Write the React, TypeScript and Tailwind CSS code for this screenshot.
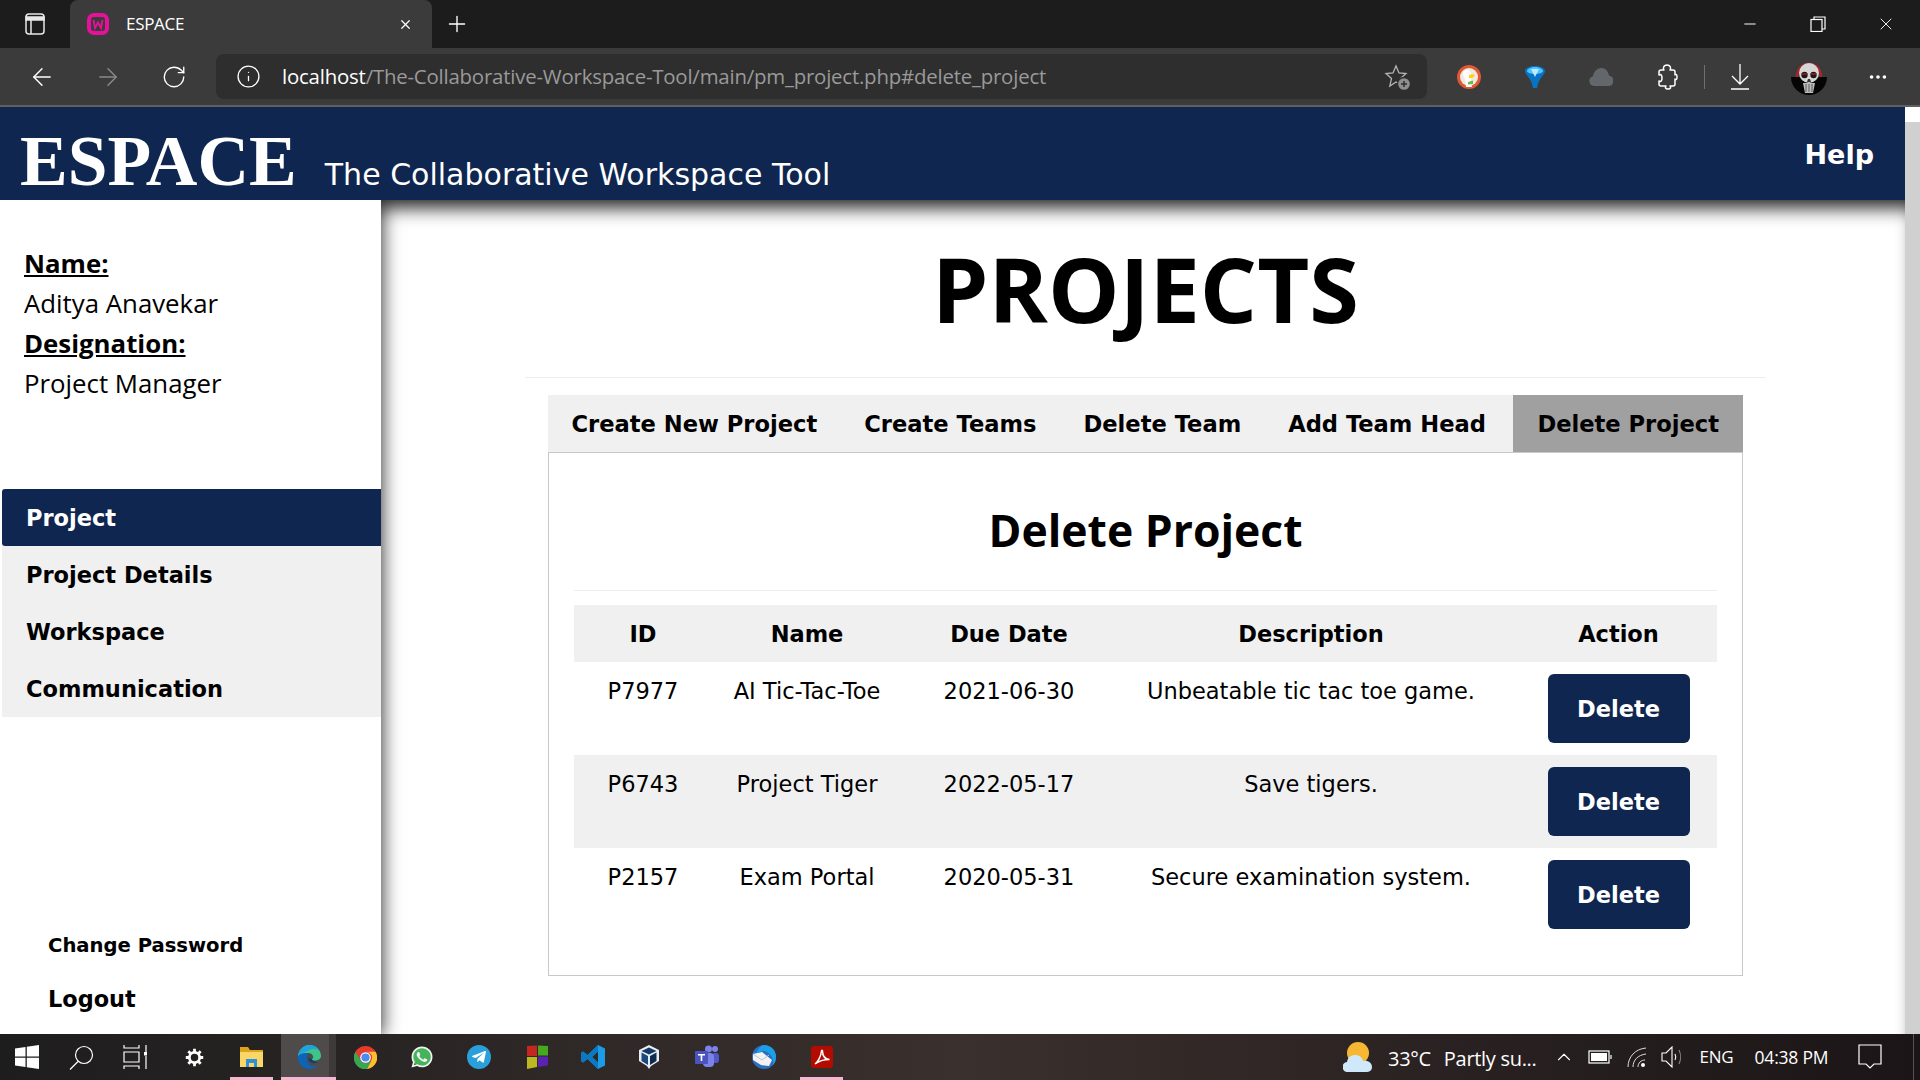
import { ArrowLeft, ArrowRight, RotateCw, Info, Plus, X, Minus, MoreHorizontal, ChevronUp } from "lucide-react";
import { FaTelegramPlane, FaWhatsapp } from "react-icons/fa";

const navItems = ["Project Details", "Workspace", "Communication"];
const tabs = ["Create New Project", "Create Teams", "Delete Team", "Add Team Head"];
const rows = [
  ["P7977", "AI Tic-Tac-Toe", "2021-06-30", "Unbeatable tic tac toe game."],
  ["P6743", "Project Tiger", "2022-05-17", "Save tigers."],
  ["P2157", "Exam Portal", "2020-05-31", "Secure examination system."],
];

function BrowserChrome() {
  return (
    <div className="h-[107px] shrink-0 border-b-2 border-[#5f5f5f] bg-[#3b3b3b] font-['Open_Sans',sans-serif] text-white">
      <div className="flex h-12 items-center bg-[#1c1c1c]">
        <div className="flex w-[70px] justify-center">
          <svg width="24" height="24" viewBox="0 0 24 24" fill="none" stroke="#e8e8e8" strokeWidth="1.5">
            <rect x="3" y="2" width="18" height="20" rx="3" />
            <path d="M3 5h18v3H3z" fill="#e8e8e8" />
            <path d="M8 8v14" />
          </svg>
        </div>
        <div className="flex h-12 w-[362px] items-center rounded-t-lg bg-[#3b3b3b] pl-4 pr-[19px]">
          <svg width="24" height="24" viewBox="0 0 24 24" fill="none" stroke="#e6119b" strokeWidth="4">
            <rect x="3" y="3" width="18" height="18" rx="5" />
            <path d="M7.500 8l1.500 8 3-5.500 3 5.500 1.500-8" strokeWidth="1.800" />
          </svg>
          <span className="ml-4 text-[17px] tracking-[-0.3px]">ESPACE</span>
          <X size={15} className="ml-auto" />
        </div>
        <Plus size={26} strokeWidth={1.25} className="ml-[12px]" />
        <div className="ml-auto flex items-center">
          <div className="flex w-[68px] justify-center"><Minus size={18} strokeWidth={1.3} /></div>
          <div className="flex w-[68px] justify-center">
            <svg width="16" height="16" viewBox="0 0 16 16" fill="none" stroke="white" strokeWidth="1.200">
              <rect x="1" y="3.500" width="11" height="12" />
              <path d="M4 3V1h11v12h-3" />
            </svg>
          </div>
          <div className="flex w-[68px] justify-center"><X size={20} strokeWidth={1.100} /></div>
        </div>
      </div>
      <div className="flex h-[57px] items-center">
        <div className="flex w-[216px] items-center">
          <div className="flex w-[84px] justify-center"><ArrowLeft size={28} strokeWidth={1.25} /></div>
          <div className="flex w-[48px] justify-center"><ArrowRight size={28} strokeWidth={1.25} className="text-[#8a8a8a]" /></div>
          <div className="flex w-[84px] justify-center"><RotateCw size={26} strokeWidth={1.25} /></div>
        </div>
        <div className="flex h-[45px] w-[1211px] items-center rounded-lg bg-[#2e2e2e] pl-5 pr-[15px] text-[20.400px] tracking-[-0.2px]">
          <Info size={25} strokeWidth={1.25} />
          <span className="ml-[21px]">localhost</span>
          <span className="text-[#9a9a9a]">/The-Collaborative-Workspace-Tool/main/pm_project.php#delete_project</span>
          <svg className="ml-auto" width="28" height="28" viewBox="0 0 28 28" fill="none" stroke="#b5b5b5" strokeWidth="1.300">
            <path d="M12 3l3 7 7 .6-5.500 5 1.700 7.400L12 19l-6.200 4 1.700-7.400L2 10.600 9 10z" />
            <circle cx="20" cy="21" r="6.500" fill="#8f8f8f" stroke="#2e2e2e" />
            <path d="M20 18v6M17 21h6" stroke="#2e2e2e" strokeWidth="1.500" />
          </svg>
        </div>
        <div className="flex flex-1 items-center">
          <div className="flex w-[84px] justify-center">
            <svg width="24" height="24" viewBox="0 0 24 24">
              <circle cx="12" cy="12" r="12" fill="#de5833" />
              <circle cx="12" cy="12" r="9" fill="#f3e7e2" />
              <path d="M7 6c3-2 7-1 7 4v8l1 4H9c0-5-1-9-3-12 0-2 0-3 1-4z" fill="#ffffff" />
              <path d="M12 10c2-1 5-1 6 0-1 1-2 3-3 3h-3z" fill="#fdd209" />
              <path d="M11 17l5-1.500v3.500l-5 .5z" fill="#65bc46" />
            </svg>
          </div>
          <div className="flex w-[48px] justify-center">
            <svg width="20" height="22" viewBox="0 0 20 22">
              <path d="M0 5c0-3 5-5 10-5s10 2 10 5c0 4-6 6-8 17H8C6 11 0 9 0 5z" fill="#0873c4" />
              <path d="M2 5c0-2 4-4 8-4s8 2 8 4c0 2-4 3-8 3S2 7 2 5z" fill="#4dc3ff" />
              <path d="M6 3h8l-4 8z" fill="#bfe9ff" />
            </svg>
          </div>
          <div className="flex w-[84px] justify-center">
            <svg width="24" height="18" viewBox="0 0 24 18">
              <path d="M5 18a5 5 0 0 1-1-9.800C5 3 8.500 0 12.500 0S19 3 20 7.500A5.300 5.300 0 0 1 19.500 18z" fill="#63676c" />
            </svg>
          </div>
          <div className="flex w-[48px] justify-center">
            <svg width="22" height="26" viewBox="0 0 22 26" fill="none" stroke="white" strokeWidth="1.500" strokeLinejoin="round">
              <path d="M7 6h1c-1-1-1-5 3-5s4 4 3 5h3c1 0 2 1 2 2v3c1-1 2-1 2 2s-1 3-2 2v5c0 1-1 2-2 2h-3c1 1 1 3-2 3s-3-2-2-3H5c-1 0-2-1-2-2v-3c2 1 3 0 3-3s-1-4-3-3V8c0-1 1-2 2-2z" />
            </svg>
          </div>
          <div className="ml-[13px] h-[24px] w-px bg-[#6f6f6f]" />
          <div className="flex w-[70px] justify-center">
            <svg width="20" height="26" viewBox="0 0 20 26" fill="none" stroke="white" strokeWidth="1.300">
              <path d="M10 0v20M2 12l8 8 8-8M1 25h18" />
            </svg>
          </div>
          <div className="flex w-[68px] justify-center">
            <div className="flex h-[36px] w-[36px] items-center justify-center overflow-hidden rounded-full bg-[linear-gradient(#3a3a3a_50%,#050505_50%)]">
              <svg width="36" height="36" viewBox="0 0 36 36">
                <path d="M6 18c0-8 5-13 12-13s12 5 12 13" fill="none" stroke="#a8262c" strokeWidth="2.500" />
                <ellipse cx="18" cy="14" rx="10" ry="10" fill="#d6d6d6" />
                <circle cx="13.500" cy="16" r="3.200" fill="#1a1a1a" />
                <circle cx="22.500" cy="16" r="3.200" fill="#1a1a1a" />
                <path d="M10 15h7M19 15h7" stroke="#c1272d" strokeWidth="1" />
                <path d="M17 20h2l1 3h-4z" fill="#333" />
                <path d="M12 24h12l-2 10h-8z" fill="#bbbbbb" />
                <path d="M15 25v8M18 25v8M21 25v8" stroke="#444" strokeWidth="0.800" />
              </svg>
            </div>
          </div>
          <div className="flex w-[70px] justify-center"><MoreHorizontal size={22} strokeWidth={2} /></div>
        </div>
      </div>
    </div>
  );
}

function Sidebar() {
  return (
    <aside className="relative z-10 flex w-[381px] shrink-0 flex-col bg-white pl-[2px] shadow-[4px_0_16px_rgba(0,0,0,0.55)]">
      <div className="pl-[22px] pt-[43px] font-['Open_Sans',sans-serif] text-[25.800px] leading-10 text-black">
        <p className="font-bold underline">Name:</p>
        <p>Aditya Anavekar</p>
        <p className="font-bold underline">Designation:</p>
        <p>Project Manager</p>
      </div>
      <nav className="mt-[86px] font-['DejaVu_Sans',sans-serif] text-[22.500px] font-bold">
        <div className="flex h-[57px] items-center rounded-l-[3px] bg-[#0f2650] pl-6 pt-[2px] text-white">Project</div>
        {navItems.map((item) => (
          <div key={item} className="flex h-[57px] items-center bg-[#f0f0f0] pl-6 pt-[2px] text-black">{item}</div>
        ))}
      </nav>
      <div className="mt-auto pb-[17px] pl-[46px] font-['DejaVu_Sans',sans-serif] font-bold text-black">
        <p className="text-[19.600px]">Change Password</p>
        <p className="mt-[23px] text-[22.400px]">Logout</p>
      </div>
    </aside>
  );
}

function ProjectsTable() {
  return (
    <table className="w-full table-fixed border-collapse text-center font-['DejaVu_Sans',sans-serif] text-[22.500px] text-black">
      <colgroup>
        <col className="w-[138px]" />
        <col className="w-[190px]" />
        <col className="w-[214px]" />
        <col className="w-[390px]" />
        <col />
      </colgroup>
      <thead>
        <tr className="h-[57px] bg-[#f0f0f0] font-bold">
          <th className="pt-[2px]">ID</th>
          <th className="pt-[2px]">Name</th>
          <th className="pt-[2px]">Due Date</th>
          <th className="pt-[2px]">Description</th>
          <th className="pt-[2px] pl-[14px]">Action</th>
        </tr>
      </thead>
      <tbody>
        {rows.map((row, i) => (
          <tr key={row[0]} className={i === 1 ? "h-[93px] bg-[#f0f0f0]" : "h-[93px] bg-white"}>
            {row.map((cell) => (
              <td key={cell} className="pt-[15px] align-top leading-7">{cell}</td>
            ))}
            <td className="pl-[14px] align-middle">
              <button className="h-[69px] w-[142px] rounded-md bg-[#0f2650] pt-[2px] font-bold text-white">Delete</button>
            </td>
          </tr>
        ))}
      </tbody>
    </table>
  );
}

function MainContent() {
  return (
    <main className="min-w-0 flex-1 bg-white pr-[139px] pl-[144px] pt-[34px] shadow-[inset_0_18px_18px_-10px_rgba(0,0,0,0.85)]">
      <h1 className="text-center font-['Open_Sans',sans-serif] text-[90px] leading-[109px] font-bold text-black">PROJECTS</h1>
      <div className="mt-[34px] border-t border-[#eeeeee]" />
      <div className="mx-[23px] mt-[17px]">
        <div className="flex h-[57px] items-stretch bg-[#f0f0f0] font-['DejaVu_Sans',sans-serif] text-[22.600px] font-bold whitespace-nowrap text-black">
          {tabs.map((tab) => (
            <div key={tab} className="flex items-center px-[23.500px] pt-[3px]">{tab}</div>
          ))}
          <div className="ml-auto flex items-center bg-[#a0a0a0] px-6 pt-[3px]">Delete Project</div>
        </div>
        <div className="h-[524px] border border-[#c8c8c8] px-[25px]">
          <h2 className="pt-[47px] text-center font-['Open_Sans',sans-serif] text-[44.500px] leading-[60px] font-bold text-black">Delete Project</h2>
          <div className="mt-[30px] border-t border-[#eeeeee]" />
          <div className="mt-[14px]">
            <ProjectsTable />
          </div>
        </div>
      </div>
    </main>
  );
}

function Taskbar() {
  return (
    <div className="flex h-[46px] shrink-0 items-stretch bg-gradient-to-r from-[#1e1d1e] via-[#3a302d] to-[#1b1517] font-['Open_Sans',sans-serif] text-white">
      <div className="flex w-[54px] items-center justify-center">
        <svg width="24" height="24" viewBox="0 0 24 24" fill="white"><path d="M0 3.500l10.500-1.500v9.500H0zM11.800 1.800L24 0v11.500H11.800zM0 12.800h10.500v9.300L0 20.600zM11.800 12.800H24V24l-12.200-1.800z" /></svg>
      </div>
      <div className="flex w-[54px] items-center justify-center">
        <svg width="25" height="25" viewBox="0 0 25 25" fill="none" stroke="white" strokeWidth="1.200"><circle cx="15" cy="10" r="8.500" /><path d="M9 16.500L1 24.500" /></svg>
      </div>
      <div className="flex w-[54px] items-center justify-center">
        <svg width="24" height="24" viewBox="0 0 24 24" fill="none" stroke="white" strokeWidth="1.200"><path d="M1 0v3h15V0M1 7h15v10H1zM1 24v-3h15v3M23 0v7M23 11v13" /><rect x="21" y="7" width="3.500" height="3.500" fill="white" stroke="none" /></svg>
      </div>
      <div className="flex w-[64px] items-center justify-center">
        <svg width="19" height="19" viewBox="0 0 24 24" fill="none" stroke="white" strokeWidth="3.500"><circle cx="12" cy="12" r="6.500" /><path d="M12 1v4M12 19v4M1 12h4M19 12h4M4.200 4.200l2.800 2.800M17 17l2.800 2.800M4.200 19.800L7 17M17 7l2.800-2.800" /></svg>
      </div>
      <div className="relative ml-1 flex w-[43px] items-center justify-center">
        <svg width="23" height="20" viewBox="0 0 23 20"><path d="M0 0h8l2 3h13v3H0z" fill="#dca51c" /><path d="M0 5h23v15H0z" fill="#fad668" /><path d="M6 12h11v8h-3v-4H9v4H6z" fill="#2f8fd8" /></svg>
        <div className="absolute inset-x-0 bottom-0 h-[3px] bg-[#f6b6d0]" />
      </div>
      <div className="relative ml-2 flex w-[55px] items-center justify-center bg-[#4e4b4a]">
        <div className="absolute inset-y-0 right-0 w-[7px] bg-[#3e3a39]" />
        <svg className="relative" width="24" height="24" viewBox="0 0 24 24">
          <path d="M1 11C2 4 7 0 12.500 0 19 0 24 5 24 11c0 3-3 4.500-6 4.500-2 0-3.500-.5-3.500-1.500 3 0 2-6-3-6C6 8 2 9 1 11z" fill="#3dc48a" />
          <path d="M1 11C2 4 7 0 12.500 0c4 0 8 2 9.500 6-3-3-8-3-11 0-3 1-7 2-9.500 5z" fill="#1fa3e0" />
          <path d="M1 11c-1 7 5 13 12 13 3 0 6-1 8-3-7 2-12-2-11-8 0-2 1-4 2-5-5 0-9 1-11 3z" fill="#0c64b8" />
          <path d="M11 12c0 5 5 8 10 5-3 0-6-1-6-3-2 0-4-1-4-2z" fill="#0a3f7a" />
        </svg>
        <div className="absolute inset-x-0 bottom-0 h-[3px] bg-[#f6b6d0]" />
      </div>
      <div className="flex w-[58px] items-center justify-center">
        <svg width="23" height="23" viewBox="0 0 24 24">
          <circle cx="12" cy="12" r="12" fill="#e53b2f" />
          <path d="M12 6h10.500a12 12 0 0 1-9 18L18 15a6 6 0 0 0-6-9z" fill="#fbc02d" />
          <path d="M1.600 6A12 12 0 0 0 13.500 24L18 15.500 12 18a6 6 0 0 1-5-3z" fill="#35a853" />
          <circle cx="12" cy="12" r="5.500" fill="#fff" />
          <circle cx="12" cy="12" r="4.300" fill="#4a8af4" />
        </svg>
      </div>
      <div className="flex w-[56px] items-center justify-center">
        <div className="flex h-[20px] w-[20px] items-center justify-center rounded-full bg-[#44b35a]">
          <FaWhatsapp size={24} className="shrink-0 text-[#f0f0f0]" />
        </div>
      </div>
      <div className="flex w-[58px] items-center justify-center">
        <div className="flex h-6 w-6 items-center justify-center rounded-full bg-[#2aa0da]"><FaTelegramPlane size={16} /></div>
      </div>
      <div className="flex w-[57px] items-center justify-center">
        <svg width="22" height="24" viewBox="0 0 22 24">
          <path d="M1 1l10-.5V11H1z" fill="#c4271f" />
          <path d="M12 .5l10 .5v9.500H12z" fill="#45a81f" />
          <path d="M1 12h10v10l-10 2z" fill="#bdb821" />
          <path d="M12 11.500h10v9L12 22z" fill="#5a22b0" />
        </svg>
      </div>
      <div className="flex w-[56px] items-center justify-center">
        <svg width="24" height="24" viewBox="0 0 24 24">
          <path d="M17 0l7 3.500v17L17 24 6.500 14 2 17.500 0 16v-8l2-1.500L6.500 10z M17 6.500L11 12l6 5.500z" fill="#1c9ce6" fillRule="evenodd" />
          <path d="M17 0L6.500 10 2 6.500 0 8v8l2 1.500L6.500 14 17 24v-6.500L11 12l6-5.500z" fill="#0a78c2" />
        </svg>
      </div>
      <div className="flex w-[56px] items-center justify-center">
        <svg width="20" height="24" viewBox="0 0 20 24">
          <path d="M10 0l10 5v11l-8 5-2 3-2-3-8-5V5z" fill="#e8eef4" />
          <path d="M10 2.500L17.500 6 10 9.500 2.500 6z" fill="#123a66" />
          <path d="M2.500 7.500L9 11v9l-6.500-4z" fill="#1a4a7c" />
          <path d="M17.500 7.500L11 11v9l6.500-4z" fill="#0e2c50" />
        </svg>
      </div>
      <div className="flex w-[59px] items-center justify-center">
        <svg width="24" height="24" viewBox="0 0 24 24">
          <circle cx="20" cy="4" r="3" fill="#7b83eb" />
          <circle cx="13.500" cy="4" r="3.500" fill="#7b83eb" />
          <rect x="17" y="8" width="7" height="10" rx="3" fill="#5059c9" />
          <rect x="8" y="8" width="11" height="14" rx="4" fill="#7b83eb" />
          <rect x="0" y="6" width="13" height="13" rx="1" fill="#4b53bc" />
          <path d="M3 9h7v1.500H7.300V16H5.700v-5.500H3z" fill="white" />
        </svg>
      </div>
      <div className="flex w-[56px] items-center justify-center">
        <svg width="24" height="24" viewBox="0 0 24 24">
          <circle cx="12" cy="12" r="12" fill="#2a6fc4" />
          <path d="M12 0a12 12 0 0 1 12 12c0 3-1 6-3 8 1-6-2-13-9-14-3 0-6 1-8 3 2-5 5-9 8-9z" fill="#1ba0e8" />
          <path d="M1 9l9-2 10 8-3 6-8-1-8-5z" fill="#f2f2f2" />
          <path d="M1 9l9 6 7-5" fill="none" stroke="#b9c6d6" strokeWidth="1" />
        </svg>
      </div>
      <div className="relative ml-2 flex w-[43px] items-center justify-center">
        <svg width="22" height="22" viewBox="0 0 22 22">
          <rect width="22" height="22" rx="3" fill="#b30b00" />
          <path d="M4 18c3-2 6-8 6.500-13 0-1 1-1 1 0 0 5 2 8 7 8.500-4 0-10 1-14.500 4.500z" fill="none" stroke="white" strokeWidth="1.500" />
        </svg>
        <div className="absolute inset-x-0 bottom-0 h-[3px] bg-[#f6b6d0]" />
      </div>
      <div className="ml-[500px] flex w-[29px] items-center">
        <svg width="29" height="30" viewBox="0 0 29 30">
          <circle cx="15" cy="11" r="11" fill="#f7b733" />
          <path d="M5 30a5 5 0 0 1-1-10c1-5 4-7 8-7 4 0 7 2 8 6 5-1 9 2 9 6s-3 5-6 5z" fill="#cfe9fb" />
        </svg>
      </div>
      <div className="ml-4 flex items-center pt-[4px] text-[20px] tracking-[-0.3px]">33°C</div>
      <div className="ml-[13px] flex items-center pt-[4px] text-[20px] tracking-[-0.3px]">Partly su...</div>
      <div className="ml-[16px] flex items-center"><ChevronUp size={22} strokeWidth={1.200} /></div>
      <div className="ml-[13px] flex items-center">
        <svg width="24" height="14" viewBox="0 0 24 14" fill="none" stroke="white" strokeWidth="1.200"><rect x="1" y="1" width="20" height="12" /><rect x="3" y="3" width="16" height="8" fill="white" stroke="none" /><path d="M23 5v4" /></svg>
      </div>
      <div className="ml-[15px] flex items-center">
        <svg width="20" height="20" viewBox="0 0 20 20" fill="none" stroke="#dddddd" strokeWidth="1"><path d="M1 20C1 10 8 2 19 1M6 20c0-7 5-12 13-13M11 20c0-4 3-7 7-7" /><circle cx="16" cy="18" r="2" fill="white" stroke="none" /></svg>
      </div>
      <div className="ml-[14px] flex items-center">
        <svg width="22" height="22" viewBox="0 0 22 22" fill="none" stroke="white" strokeWidth="1.100"><path d="M1 7h4l6-6v20l-6-6H1z" /><path d="M14 8c1 2 1 4 0 6" /><path d="M18 4c2 4 2 10 0 14" stroke="#888888" /></svg>
      </div>
      <div className="ml-[17px] flex items-center text-[17px] tracking-[-0.2px]">ENG</div>
      <div className="ml-[21px] flex items-center text-[17.500px] tracking-[-0.2px]">04:38 PM</div>
      <div className="ml-[30px] flex items-center">
        <svg width="24" height="26" viewBox="0 0 24 26" fill="none" stroke="white" strokeWidth="1.200"><path d="M1 1h22v19h-7l-4 4-4-4H1z" /></svg>
      </div>
      <div className="ml-auto mr-[6px] w-px bg-[#555555]" />
    </div>
  );
}

export default function App() {
  return (
    <div className="flex h-[1080px] w-[1920px] flex-col overflow-hidden bg-white">
      <BrowserChrome />
      <div className="flex min-h-0 flex-1">
        <div className="flex min-w-0 flex-1 flex-col">
          <header className="flex h-[93px] shrink-0 items-end bg-[#0f2650] pr-[31px] pl-[20px] text-white">
            <span className="mb-[-4px] font-['Liberation_Serif',serif] text-[71.500px] leading-[86px] font-bold">ESPACE</span>
            <span className="mb-[3px] ml-[28px] font-['DejaVu_Sans',sans-serif] text-[30px]">The Collaborative Workspace Tool</span>
            <span className="mb-[25px] ml-auto font-['DejaVu_Sans',sans-serif] text-[27px] font-bold">Help</span>
          </header>
          <div className="flex min-h-0 flex-1 overflow-hidden">
            <Sidebar />
            <MainContent />
          </div>
        </div>
        <div className="w-[15px] shrink-0 bg-[#d0d0d0]">
          <div className="h-[15px] bg-white" />
        </div>
      </div>
      <Taskbar />
    </div>
  );
}
